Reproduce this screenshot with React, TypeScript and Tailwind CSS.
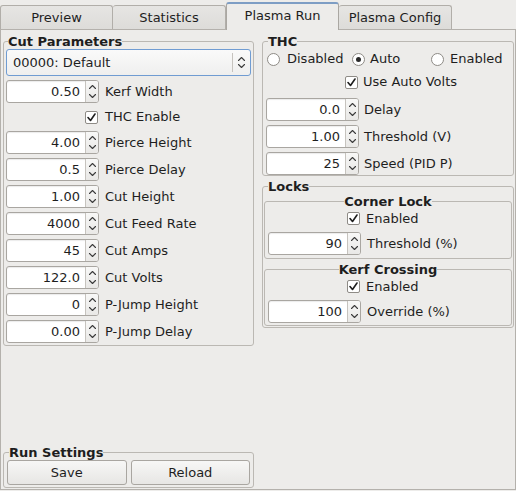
import React from 'react'

const spinArrows = (
  <svg width="9" height="19" viewBox="0 0 9 19" fill="none" stroke="#3c3c3c" strokeWidth="1.1" strokeLinecap="round" strokeLinejoin="round">
    <polyline points="1.5,6.5 4.5,3.5 7.5,6.5" />
    <polyline points="1.5,12.5 4.5,15.5 7.5,12.5" />
  </svg>
)

function Spin({ value }: { value: string }) {
  return (
    <div className="flex w-[93px] h-[23px] shrink-0 rounded-[3px] border border-[#a9a6a1] bg-white overflow-hidden shadow-[inset_0_1px_1px_rgba(0,0,0,0.08)]">
      <div className="flex-1 flex items-center justify-end pr-[5px] leading-none">{value}</div>
      <div className="w-[13px] border-l border-[#c6c3be] bg-gradient-to-b from-[#f8f8f7] to-[#e9e8e6] flex items-center justify-center">
        {spinArrows}
      </div>
    </div>
  )
}

function Check() {
  return (
    <div className="w-[13px] h-[13px] rounded-[2px] border border-[#8e8b86] bg-white flex items-center justify-center">
      <svg width="11" height="11" viewBox="0 0 11 11" fill="none" stroke="#1e1e1e" strokeWidth="1.6" strokeLinecap="round" strokeLinejoin="round">
        <polyline points="2,5.5 4.5,8.5 9,2" />
      </svg>
    </div>
  )
}

function Radio({ on }: { on?: boolean }) {
  return (
    <div className="w-[13px] h-[13px] shrink-0 rounded-full border border-[#8e8b86] bg-white flex items-center justify-center">
      {on && <div className="w-[5px] h-[5px] rounded-full bg-[#2a2a2a]" />}
    </div>
  )
}

function SpinRow({ value, label, gap = 'ml-[6px]' }: { value: string; label: string; gap?: string }) {
  return (
    <div className="flex items-center h-[23px]">
      <Spin value={value} />
      <span className={`${gap} whitespace-nowrap`}>{label}</span>
    </div>
  )
}

function CheckRow({ label, h = 'h-[20px]', gap = 'ml-[6px]' }: { label: string; h?: string; gap?: string }) {
  return (
    <div className={`flex items-center ${h}`}>
      <div className="w-[93px] flex justify-end pr-[1px]">
        <Check />
      </div>
      <span className={`${gap} whitespace-nowrap`}>{label}</span>
    </div>
  )
}

const tabs = ['Preview', 'Statistics', 'Plasma Run', 'Plasma Config']

export default function App() {
  return (
    <div className="w-[516px] h-[491px] bg-[#edecea] text-[13px] text-[#1e1e1e] font-['DejaVu_Sans',sans-serif] overflow-hidden">
      {/* TAB BAR */}
      <div className="flex items-end h-[29px]">
        {tabs.map((t, i) =>
          t === 'Plasma Run' ? (
            <div
              key={t}
              className="relative z-10 -mb-px w-[113px] h-[28px] rounded-t-[3px] border-x border-t-2 border-x-[#aaa7a2] border-t-[#7d9dc4] bg-[#edecea] flex items-center justify-center pb-[2px]"
            >
              {t}
            </div>
          ) : (
            <div
              key={t}
              className={`w-[113px] h-[24px] rounded-t-[3px] border-t border-r border-[#b1aea9] bg-gradient-to-b from-[#e6e5e3] to-[#dddcd9] flex items-center justify-center ${i === 0 ? 'border-l' : ''}`}
            >
              {t}
            </div>
          )
        )}
      </div>

      {/* TAB PAGE */}
      <div className="h-[461px] border border-[#b4b1ac] flex pl-[2px] pr-[1px] pt-[4px]">
        {/* LEFT COLUMN */}
        <div className="w-[251px] flex flex-col justify-between pb-[1px]">
          <fieldset className="border border-[#bbb8b3] rounded-[3px] px-[2px] pb-[2px] flex flex-col gap-[4px]">
            <legend className="ml-[2px] font-bold leading-[15px]">Cut Parameters</legend>
            <div className="h-[27px] rounded-[3px] border border-[#709cd2] bg-gradient-to-b from-[#fafafa] to-[#efefee] flex items-center pl-[6px]">
              <span className="flex-1">00000: Default</span>
              <div className="h-[19px] border-l border-[#c6c3be] w-[18px] flex items-center justify-center">
                <svg width="9" height="15" viewBox="0 0 9 15" fill="none" stroke="#3c3c3c" strokeWidth="1.1" strokeLinecap="round" strokeLinejoin="round">
                  <polyline points="1.5,5.5 4.5,2.5 7.5,5.5" />
                  <polyline points="1.5,9.5 4.5,12.5 7.5,9.5" />
                </svg>
              </div>
            </div>
            <SpinRow value="0.50" label="Kerf Width" />
            <CheckRow label="THC Enable" />
            <SpinRow value="4.00" label="Pierce Height" />
            <SpinRow value="0.5" label="Pierce Delay" />
            <SpinRow value="1.00" label="Cut Height" />
            <SpinRow value="4000" label="Cut Feed Rate" />
            <SpinRow value="45" label="Cut Amps" />
            <SpinRow value="122.0" label="Cut Volts" />
            <SpinRow value="0" label="P-Jump Height" />
            <SpinRow value="0.00" label="P-Jump Delay" />
          </fieldset>

          <fieldset className="border border-[#bbb8b3] rounded-[3px] px-[3px] pb-[2px]">
            <legend className="ml-[2px] font-bold leading-[15px]">Run Settings</legend>
            <div className="grid grid-cols-2 gap-[4px]">
              <button className="h-[25px] rounded-[3px] border border-[#a9a6a1] bg-gradient-to-b from-[#f7f7f6] to-[#e7e6e4]">Save</button>
              <button className="h-[25px] rounded-[3px] border border-[#a9a6a1] bg-gradient-to-b from-[#f7f7f6] to-[#e7e6e4]">Reload</button>
            </div>
          </fieldset>
        </div>

        {/* RIGHT COLUMN */}
        <div className="ml-[8px] w-[252px] flex flex-col">
          <fieldset className="border border-[#bbb8b3] rounded-[3px] px-[3px]">
            <legend className="ml-[2px] font-bold leading-[15px]">THC</legend>
            <div className="flex items-center h-[20px] pl-px">
              <div className="w-[85px] flex items-center">
                <Radio />
                <span className="ml-[7px]">Disabled</span>
              </div>
              <div className="w-[79px] flex items-center">
                <Radio on />
                <span className="ml-[5px]">Auto</span>
              </div>
              <div className="flex items-center">
                <Radio />
                <span className="ml-[6px]">Enabled</span>
              </div>
            </div>
            <div className="mt-[3px]">
              <CheckRow label="Use Auto Volts" gap="ml-[4px]" />
            </div>
            <div className="mt-[6px] flex flex-col gap-[4px]">
              <SpinRow value="0.0" label="Delay" gap="ml-[5px]" />
              <SpinRow value="1.00" label="Threshold (V)" gap="ml-[5px]" />
              <SpinRow value="25" label="Speed (PID P)" gap="ml-[5px]" />
            </div>
          </fieldset>

          <fieldset className="mt-[3px] border border-[#bbb8b3] rounded-[3px] px-[1px] pb-[1px]">
            <legend className="ml-[4px] font-bold leading-[15px]">Locks</legend>
            <fieldset className="border border-[#bbb8b3] rounded-[3px] px-[3px] pb-[3px] flex flex-col gap-[4px]">
              <legend className="mx-auto font-bold leading-[15px]">Corner Lock</legend>
              <CheckRow label="Enabled" h="h-[19px]" gap="ml-[5px]" />
              <SpinRow value="90" label="Threshold (%)" gap="ml-[6px]" />
            </fieldset>
            <fieldset className="mt-[3px] border border-[#bbb8b3] rounded-[3px] px-[3px] pb-[2px] flex flex-col gap-[4px]">
              <legend className="mx-auto font-bold leading-[15px]">Kerf Crossing</legend>
              <CheckRow label="Enabled" h="h-[19px]" gap="ml-[5px]" />
              <SpinRow value="100" label="Override (%)" gap="ml-[6px]" />
            </fieldset>
          </fieldset>
        </div>
      </div>
    </div>
  )
}
